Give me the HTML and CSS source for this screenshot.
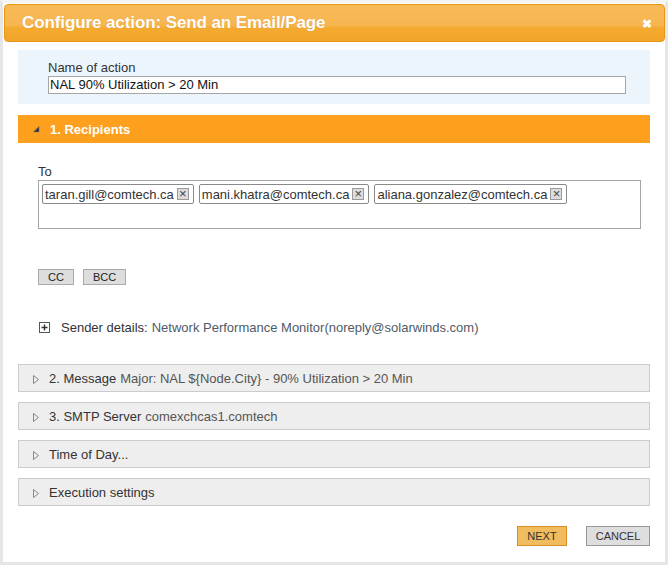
FILE: index.html
```html
<!DOCTYPE html>
<html lang="en">
<head>
    <meta charset="UTF-8">
    <title>Configure action</title>
    <link rel="stylesheet" href="styles.css">
</head>
<body>
    <div class="dialog">
        <div class="titlebar">
            <span class="title">Configure action: Send an Email/Page</span>
            <span class="close">&#10006;</span>
        </div>
        <div class="content">
            <div class="name-box">
                <label class="name-label">Name of action</label>
                <div class="name-input">NAL 90% Utilization &gt; 20 Min</div>
            </div>

            <div class="section-head open">
                <svg class="tri" width="7" height="7" viewBox="0 0 7 7"><polygon points="6,0.5 6,6 0.5,6" fill="#333" stroke="#777" stroke-width="0.6"/></svg>
                <span>1. Recipients</span>
            </div>
            <div class="recipients">
                <div class="to-label">To</div>
                <div class="to-box">
                    <span class="chip">taran.gill@comtech.ca<i class="x">&#215;</i></span>
                    <span class="chip">mani.khatra@comtech.ca<i class="x">&#215;</i></span>
                    <span class="chip">aliana.gonzalez@comtech.ca<i class="x">&#215;</i></span>
                </div>
                <div class="cc-row">
                    <span class="small-btn cc">CC</span>
                    <span class="small-btn bcc">BCC</span>
                </div>
                <div class="sender">
                    <svg class="plus" width="11" height="11" viewBox="0 0 11 11"><rect x="0.5" y="0.5" width="10" height="10" fill="#fff" stroke="#555"/><path d="M2.5 5.5h6M5.5 2.5v6" stroke="#333" stroke-width="1.4"/></svg>
                    <span class="sender-label">Sender details:</span>
                    <span class="sender-value">Network Performance Monitor(noreply@solarwinds.com)</span>
                </div>
            </div>

            <div class="section-head closed">
                <svg class="tri" width="6" height="9" viewBox="0 0 6 9"><polygon points="0.5,0.5 5.5,4.5 0.5,8.5" fill="none" stroke="#888"/></svg>
                <span>2. Message</span><span class="val">Major: NAL ${Node.City} - 90% Utilization &gt; 20 Min</span>
            </div>
            <div class="section-head closed">
                <svg class="tri" width="6" height="9" viewBox="0 0 6 9"><polygon points="0.5,0.5 5.5,4.5 0.5,8.5" fill="none" stroke="#888"/></svg>
                <span>3. SMTP Server</span><span class="val">comexchcas1.comtech</span>
            </div>
            <div class="section-head closed">
                <svg class="tri" width="6" height="9" viewBox="0 0 6 9"><polygon points="0.5,0.5 5.5,4.5 0.5,8.5" fill="none" stroke="#888"/></svg>
                <span>Time of Day...</span>
            </div>
            <div class="section-head closed">
                <svg class="tri" width="6" height="9" viewBox="0 0 6 9"><polygon points="0.5,0.5 5.5,4.5 0.5,8.5" fill="none" stroke="#888"/></svg>
                <span>Execution settings</span>
            </div>

            <div class="footer">
                <span class="btn next">NEXT</span>
                <span class="btn cancel">CANCEL</span>
            </div>
        </div>
    </div>
</body>
</html>
```

FILE: styles.css
```css
* {
    margin: 0;
    padding: 0;
    box-sizing: border-box;
}
body {
    font-family: "Liberation Sans", Arial, sans-serif;
    background: #fff;
    color: #333;
}
.dialog {
    width: 668px;
    height: 565px;
    border: 3px solid #e6e6e6;
    border-top-color: #f4f4f4;
    background: #fff;
}
.titlebar {
    margin: 1px 0 0 1px;
    height: 38px;
    border: 1px solid #e99611;
    border-radius: 4px;
    background: linear-gradient(to bottom, #f8ba58 0%, #f7b650 55%, #f4a92f 65%, #f3a42a 100%);
    display: flex;
    align-items: center;
    justify-content: space-between;
    padding: 0 12px 0 17px;
}
.title {
    color: #fff;
    font-weight: bold;
    font-size: 17px;
    letter-spacing: -0.1px;
    text-shadow: 0 0 1px rgba(160, 90, 0, 0.3);
}
.close {
    color: #fff;
    font-size: 12px;
    font-weight: bold;
    margin-top: 2px;
}
.content {
    padding: 0 15px;
}
.name-box {
    margin-top: 8px;
    height: 54px;
    background: #edf5fc;
    padding: 10px 24px 0 30px;
}
.name-label {
    display: block;
    font-size: 13px;
    color: #333;
    line-height: 16px;
}
.name-input {
    height: 18px;
    border: 1px solid #a6a6a6;
    background: #fff;
    font-size: 13px;
    line-height: 16px;
    padding-left: 1px;
    color: #111;
}
.section-head {
    height: 28px;
    display: flex;
    align-items: center;
    padding-left: 15px;
    font-size: 13px;
}
.section-head .tri {
    margin-right: 10px;
}
.section-head.open {
    margin-top: 11px;
    background: #fe9f1e;
    color: #fff;
    font-weight: bold;
    padding-left: 15px;
}
.section-head.open .tri {
    margin-top: 1px;
    margin-right: 10px;
}
.section-head.closed {
    height: 28px;
    margin-bottom: 10px;
    background: #eeeeee;
    border: 1px solid #cccccc;
    color: #333;
    padding-left: 14px;
}
.section-head.closed .tri {
    margin-top: 3px;
    margin-right: 10px;
}
.section-head .val {
    color: #555;
    margin-left: 4px;
}
.recipients {
    padding: 21px 9px 0 20px;
    height: 221px;
}
.to-label {
    font-size: 13px;
    line-height: 16px;
}
.to-box {
    height: 49px;
    border: 1px solid #a6a6a6;
    padding: 3px 3px;
    display: flex;
    gap: 5px;
    align-items: flex-start;
}
.chip {
    display: flex;
    align-items: center;
    height: 20px;
    border: 1px solid #8a8a8a;
    border-radius: 2px;
    padding: 0 4px 0 2px;
    font-size: 13px;
    color: #333;
}
.x {
    display: inline-block;
    width: 12px;
    height: 12px;
    margin-left: 3px;
    background: #dcdcdc;
    border: 1px solid #9a9a9a;
    font-style: normal;
    font-size: 13px;
    line-height: 9px;
    text-align: center;
    color: #444;
}
.cc-row {
    margin-top: 40px;
    display: flex;
    gap: 9px;
}
.small-btn {
    height: 16px;
    border: 1px solid #aaa;
    background: #ddd;
    font-size: 11px;
    line-height: 14px;
    text-align: center;
    color: #222;
}
.cc {
    width: 36px;
}
.bcc {
    width: 43px;
}
.sender {
    margin-top: 35px;
    display: flex;
    align-items: center;
    font-size: 13px;
}
.plus {
    margin: 0 11px 0 1px;
}
.sender-label {
    color: #333;
    margin-right: 4px;
}
.sender-value {
    color: #505a66;
}
.footer {
    margin-top: 20px;
    display: flex;
    justify-content: flex-end;
    gap: 19px;
}
.btn {
    height: 20px;
    font-size: 11px;
    line-height: 18px;
    text-align: center;
    color: #333;
}
.next {
    width: 50px;
    background: #f1bc5d;
    border: 1px solid #d98d24;
}
.cancel {
    width: 64px;
    background: #dedede;
    border: 1px solid #999;
}
```
